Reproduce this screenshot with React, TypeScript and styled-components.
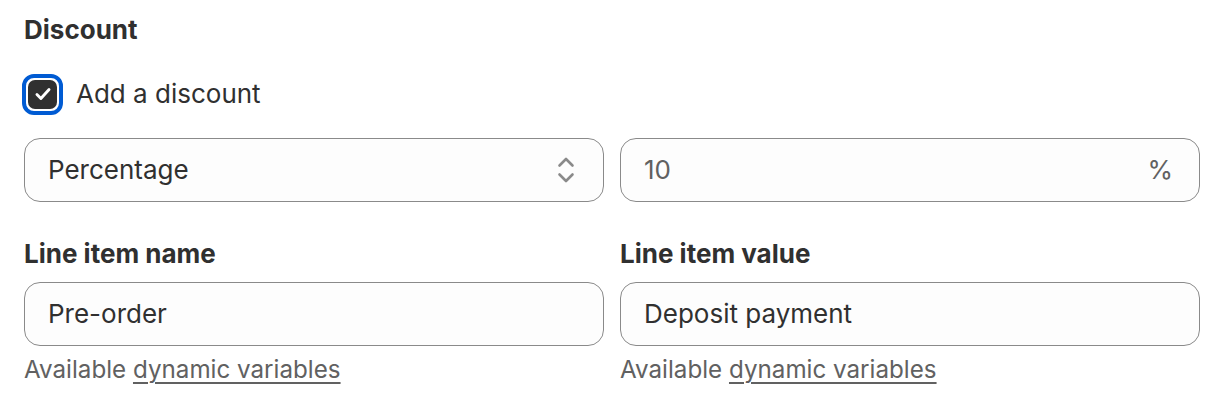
import React from "react";
import styled, { createGlobalStyle } from "styled-components";

const Global = createGlobalStyle`
  html, body { margin: 0; padding: 0; background: #ffffff; }
  body { font-family: Inter, "Noto Sans", sans-serif; color: #303030; -webkit-font-smoothing: antialiased; }
`;

const Page = styled.div`
  width: 1176px;
  padding: 10px 26px 0 24px;
  display: flex;
  flex-direction: column;
`;

const Heading = styled.h2`
  margin: 0;
  font-size: 26px;
  line-height: 40px;
  font-weight: 650;
  color: #303030;
`;

const CheckRow = styled.label`
  margin-top: 24px;
  display: flex;
  align-items: center;
  gap: 13px;
  height: 40px;
  font-size: 26px;
  line-height: 40px;
  color: #303030;
`;

const CheckRing = styled.span`
  width: 41px;
  height: 41px;
  box-sizing: border-box;
  border: 4px solid #005bd3;
  border-radius: 12px;
  padding: 2px;
  margin-left: -2px;
  display: flex;
`;

const CheckBox = styled.span`
  flex: 1;
  background: #303030;
  border-radius: 7px;
  display: flex;
  align-items: center;
  justify-content: center;
`;

const Grid = styled.div<{ $top: number }>`
  display: grid;
  grid-template-columns: 1fr 1fr;
  column-gap: 16px;
  margin-top: ${(p) => p.$top}px;
`;

const Field = styled.div`
  display: flex;
  flex-direction: column;
`;

const Label = styled.div`
  font-size: 26px;
  line-height: 40px;
  font-weight: 650;
  color: #303030;
  margin-bottom: 8px;
`;

const Box = styled.div`
  height: 64px;
  box-sizing: border-box;
  border: 1.4px solid #8a8a8a;
  border-radius: 16px;
  background: #fdfdfd;
  display: flex;
  align-items: center;
  padding: 0 26px 0 23px;
  font-size: 26px;
  line-height: 40px;
`;

const Value = styled.span<{ $muted?: boolean }>`
  flex: 1;
  color: ${(p) => (p.$muted ? "#616161" : "#303030")};
`;

const Suffix = styled.span`
  color: #616161;
`;

const Help = styled.div`
  margin-top: 4px;
  font-size: 24.2px;
  line-height: 40px;
  color: #616161;
`;

const Link = styled.a`
  color: #616161;
  text-decoration: underline;
  text-underline-offset: 4px;
  text-decoration-thickness: 2px;
`;

const Check = () => (
  <svg width="22" height="22" viewBox="0 0 20 20">
    <path d="M4.5 10.5l3.6 3.6 7.4-8.2" fill="none" stroke="#fff" strokeWidth="2.6" strokeLinecap="round" strokeLinejoin="round" />
  </svg>
);

const Chevrons = () => (
  <svg width="22" height="30" viewBox="0 0 22 30">
    <path d="M4.5 10.5l6.5-6.5 6.5 6.5M4.5 19.5l6.5 6.5 6.5-6.5" fill="none" stroke="#8a8a8a" strokeWidth="2.6" strokeLinecap="round" strokeLinejoin="round" />
  </svg>
);

export default function App() {
  return (
    <>
      <Global />
      <Page>
        <Heading>Discount</Heading>
        <CheckRow>
          <CheckRing>
            <CheckBox>
              <Check />
            </CheckBox>
          </CheckRing>
          Add a discount
        </CheckRow>
        <Grid $top={24}>
          <Box>
            <Value>Percentage</Value>
            <Chevrons />
          </Box>
          <Box>
            <Value $muted>10</Value>
            <Suffix>%</Suffix>
          </Box>
        </Grid>
        <Grid $top={32}>
          <Field>
            <Label>Line item name</Label>
            <Box>
              <Value>Pre-order</Value>
            </Box>
            <Help>
              Available <Link>dynamic variables</Link>
            </Help>
          </Field>
          <Field>
            <Label>Line item value</Label>
            <Box>
              <Value>Deposit payment</Value>
            </Box>
            <Help>
              Available <Link>dynamic variables</Link>
            </Help>
          </Field>
        </Grid>
      </Page>
    </>
  );
}
